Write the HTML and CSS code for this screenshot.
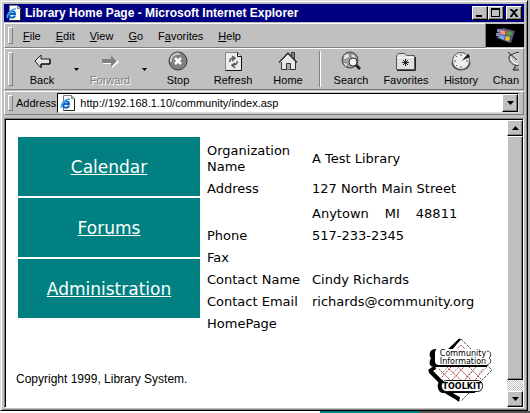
FILE: index.html
```html
<!DOCTYPE html>
<html lang="en">
<head>
<meta charset="utf-8">
<title>Library Home Page</title>
<link rel="stylesheet" href="styles.css">
</head>
<body>
<svg class="defs" aria-hidden="true">
  <symbol id="ie-page" viewBox="0 0 16 16">
    <path d="M3.5 .5h8l3 3v12h-11z" fill="#fffff4" stroke="#808080"/>
    <path d="M11.5 .5v3h3" fill="#c0c0c0" stroke="#808080"/>
    <path d="M14.5 4v11.5h-11" fill="none" stroke="#222"/>
    <path d="M9 10.5c-1 3-6 3-6-1s6-4.500 6-.5H3.500" fill="none" stroke="#0864c8" stroke-width="2"/>
    <path d="M2 13C-1 12 5 3 10 4" fill="none" stroke="#48a8f0" stroke-width="1.500"/>
  </symbol>
</svg>
<div class="window">
  <header class="titlebar">
    <svg class="page-icon"><use href="#ie-page"/></svg>
    <h1>Library Home Page - Microsoft Internet Explorer</h1>
    <div class="controls">
      <button class="raised" aria-label="Minimize"><svg viewBox="0 0 12 10"><path d="M2 7h6v2H2z"/></svg></button>
      <button class="raised" aria-label="Maximize"><svg viewBox="0 0 12 10"><path fill-rule="evenodd" d="M1 0h9v9H1zM2 2v6h7V2z"/></svg></button>
      <button class="raised close" aria-label="Close"><svg viewBox="0 0 12 10"><path d="M2 1h2l2 2 2-2h2v1L7 4.500 10 8v1H8L6 6 4 9H2V8l3-3.500L2 2z"/></svg></button>
    </div>
  </header>

  <div class="menu-row">
    <nav class="bar menus">
      <button><u>F</u>ile</button><button><u>E</u>dit</button><button><u>V</u>iew</button><button><u>G</u>o</button><button>F<u>a</u>vorites</button><button><u>H</u>elp</button>
    </nav>
    <svg class="brand" viewBox="0 0 38 23" aria-hidden="true">
      <path d="M0 0h38v23H0z"/>
      <path d="M12 6l5-2 12 3-4 12-4-1-10-4z" fill="#555a78"/>
      <path d="M11 5h4v3h-4zM10 9h4v3h-4z" fill="#8585b8"/>
      <path d="M15 6l5 1-1 4-5-1z" fill="#e89a90"/>
      <path d="M21 7l5 1-1 4-5-1z" fill="#50a050"/>
      <path d="M14 11l5 1-1 4-5-2z" fill="#70a8f0"/>
      <path d="M20 12l4 1-1 4-4-1z" fill="#f0c030"/>
      <path d="M19 7h2v3h-2z" fill="#e04818"/>
    </svg>
  </div>

  <div class="bar toolbar">
    <button class="tool"><svg viewBox="0 0 20 20"><path d="M3 10l6-6v4h9v5H9v4z" fill="#e4e4e4" stroke="#222"/><path d="M9 16v-3h9V8" fill="none" stroke="#000"/></svg>Back</button>
    <button class="drop" aria-label="Back history"><svg viewBox="0 0 5 3"><path d="M0 0h5L2.500 3z"/></svg></button>
    <button class="tool off"><svg viewBox="0 0 20 20"><path d="M3 9h9V5l7 6-7 6v-4H3z" fill="#fff"/><path d="M2 8h9V4l6 6-6 6v-4H2z" fill="#808080"/></svg>Forward</button>
    <button class="drop" aria-label="Forward history"><svg viewBox="0 0 5 3"><path d="M0 0h5L2.500 3z"/></svg></button>
    <button class="tool"><svg viewBox="0 0 20 20"><circle cx="10" cy="10" r="9" fill="#808080" stroke="#333"/><path d="M3 11a7 7 0 0 1 9-8" fill="none" stroke="#c8c8c8" stroke-width="2"/><path d="M7 7l6 6M13 7l-6 6" stroke="#fff" stroke-width="2.500"/></svg>Stop</button>
    <button class="tool"><svg viewBox="0 0 20 20"><path d="M2.500 1.500h12l4 4v14h-16z" fill="#ececec" stroke="#888"/><path d="M14.500 1.500v4h4v14h-16" fill="none" stroke="#111"/><path d="M7 11c-1-3 2-4 4-4M9 5l3 2-3 3M14 10c1 3-2 4-4 4M12 12l-3 2 3 3" fill="none" stroke="#555" stroke-width="1.500"/></svg>Refresh</button>
    <button class="tool"><svg viewBox="0 0 20 20"><path d="M13.500 5V1.500h3V8" fill="#888" stroke="#333"/><path d="M3.500 10v8.500h14V10l-7-7z" fill="#e8e8e8" stroke="#333"/><path d="M1 11.500L10 2l9 9.500" fill="none" stroke="#333" stroke-width="1.500"/><path d="M3 11l7-7" stroke="#fff"/><path d="M8.500 18.500v-6h4v6" fill="#aaa" stroke="#333"/></svg>Home</button>
    <span class="separator"></span>
    <button class="tool"><svg viewBox="0 0 20 20"><circle cx="9" cy="9" r="8" fill="#a4a4a4" stroke="#444"/><path d="M3 4l4-2 2 3-3 3-4 1zM10 2l5 3-1 3-4-2zM2 11l4 1 1 4-3-1z" fill="#e4e4e4" stroke="#666" stroke-width=".7"/><path d="M15 14l4 4" stroke="#222" stroke-width="3"/><circle cx="12" cy="11" r="4" fill="#f4f4f4" stroke="#333"/></svg>Search</button>
    <button class="tool"><svg viewBox="0 0 20 20"><path d="M.5 18.500v-14l2-2h6l2 2h8v14z" fill="#e0e0e0" stroke="#555"/><path d="M1 6.500h17" stroke="#fff"/><path d="M19.500 6v13.500H1" fill="none" stroke="#222"/><path d="M9.500 8v7M6 11.500h7M7 9l5 5M12 9l-5 5" stroke="#222"/></svg>Favorites</button>
    <button class="tool"><svg viewBox="0 0 20 20"><ellipse cx="10" cy="12" rx="9.500" ry="7.500" fill="#555"/><circle cx="10" cy="10" r="8.500" fill="#eee" stroke="#555"/><path d="M10 3v2M3 10h2M10 15v2M15 10h2M5 5l1 1M5 15l1-1" stroke="#555"/><path d="M10 10l7-8 2 4z" fill="#222"/><path d="M10 10l7-8" stroke="#eee"/></svg>History</button>
    <button class="tool partial"><svg viewBox="0 0 12 20"><path d="M2 5c-1 6 5 11 11 9V1L8 2z" fill="#ccc" stroke="#333"/><path d="M1 1l9 8M9 14l-3 5h7" fill="#999" stroke="#222"/><path d="M4 7c1 4 4 6 7 6" fill="none" stroke="#fff"/></svg>Chan</button>
  </div>

  <div class="bar address">
    <label for="url">Address</label>
    <div class="combo">
      <svg class="page-icon"><use href="#ie-page"/></svg>
      <input id="url" type="text" value="http://192.168.1.10/community/index.asp">
      <button class="raised" aria-label="Show addresses"><svg viewBox="0 0 7 4"><path d="M0 0h7L3.500 4z"/></svg></button>
    </div>
  </div>

  <div class="viewport">
    <main>
      <div class="columns">
        <nav class="sections">
          <a href="#calendar">Calendar</a>
          <a href="#forums">Forums</a>
          <a href="#administration">Administration</a>
        </nav>
        <table>
          <tr><th scope="row">Organization Name</th><td>A Test Library</td></tr>
          <tr><th scope="row">Address</th><td>127 North Main Street</td></tr>
          <tr class="city"><th></th><td><span>Anytown</span><span>MI</span><span>48811</span></td></tr>
          <tr><th scope="row">Phone</th><td>517-233-2345</td></tr>
          <tr><th scope="row">Fax</th><td></td></tr>
          <tr><th scope="row">Contact Name</th><td>Cindy Richards</td></tr>
          <tr><th scope="row">Contact Email</th><td>richards@community.org</td></tr>
          <tr><th scope="row">HomePage</th><td></td></tr>
        </table>
      </div>
      <footer>
        <p>Copyright 1999, Library System.</p>
        <svg class="logo" viewBox="0 0 66 64" role="img" aria-label="Community Information Toolkit">
          <path d="M34 1l31 31-31 31" fill="none" stroke="#555" stroke-dasharray="3 1"/>
          <path d="M33 1L22 12M2 32l30 31" stroke="#000" stroke-width="2"/>
          <path d="M32 1L20 12h5L34 1zM1 32l7-5 1 4-3 2 11 11-3 3zM16 54l4-1 13 7-1 3z"/>
          <path d="M3 33l12 12M20 54l12 7" stroke="#000" stroke-width="4"/>
          <path d="M29 12l5-5 5 5M12 31l13 13M20 29l17 16M31 29l16 16M42 29l12 12M15 39l9-10M25 42l12-13M36 44l13-15M47 44l9-13" fill="none" stroke="#a33" stroke-dasharray="2 1"/>
          <path d="M14 36l7-7M24 37l8-8M39 39l10-10M52 37l8-8" stroke="#999" stroke-dasharray="2 1"/>
          <path d="M9 11c-8 0-7 8-5 9-3 6-1 9 4 9h52v-3H10V13z"/>
          <rect x="8" y="11" width="56" height="16" rx="4" fill="#fff"/>
          <path d="M60 13c4 0 5 5 2 7 3 2 2 6-2 7" fill="none" stroke="#333"/>
          <path d="M16 42c-7 0-7 12 0 13h32v-3H17z"/>
          <rect x="14.500" y="42.500" width="41" height="11" rx="5" fill="#fff" stroke="#111"/>
          <text class="small" x="36" y="18">Community</text>
          <text class="small" x="36" y="26">Information</text>
          <text class="kit" x="35" y="51">TOOLKIT</text>
        </svg>
      </footer>
    </main>
    <div class="scrollbar">
      <button class="raised" aria-label="Scroll up"><svg viewBox="0 0 7 4"><path d="M0 4h7L3.500 0z"/></svg></button>
      <div class="thumb raised"></div>
      <div class="track"></div>
      <button class="raised" aria-label="Scroll down"><svg viewBox="0 0 7 4"><path d="M0 0h7L3.500 4z"/></svg></button>
    </div>
  </div>
</div>
</body>
</html>
```
FILE: styles.css
```css
* { box-sizing: border-box; }

body {
  display: flex;
  min-height: 100vh;
  margin: 0;
  padding: 0 2px 2px 0;
  font: 11px/14px "Liberation Sans", Arial, sans-serif;
  color: #000;
  background: linear-gradient(90deg, #fff 320px, #008080 320px 420px, #555 420px) bottom / 100% 2px no-repeat #b8b8b8;
}

button {
  margin: 0;
  padding: 0;
  border: 0;
  font: inherit;
  color: inherit;
  background: none;
}

.defs { position: absolute; width: 0; height: 0; }

.window {
  display: flex;
  flex: 1;
  flex-direction: column;
  min-width: 0;
  padding: 3px 3px 2px 3px;
  border: 1px solid #dfdfdf;
  border-right-color: #000;
  border-bottom-color: #000;
  background: #c0c0c0;
  box-shadow: inset 1px 1px #fff, inset -1px -1px #808080;
}

.raised {
  display: flex;
  align-items: center;
  justify-content: center;
  border: 1px solid;
  border-color: #fff #000 #000 #fff;
  background: #c0c0c0;
  box-shadow: inset -1px -1px #808080;
}

.page-icon { flex: none; width: 16px; height: 16px; }

.titlebar {
  display: flex;
  align-items: center;
  height: 18px;
  padding: 0 2px;
  color: #fff;
  background: #000080;
}

.titlebar h1 {
  flex: 1;
  margin: 0 0 0 3px;
  overflow: hidden;
  font-size: 12px;
  white-space: nowrap;
}

.controls { display: flex; color: #000; }
.controls button { width: 16px; height: 14px; }
.controls .close { margin-left: 2px; }
.controls svg { width: 12px; height: 10px; }

.menu-row { display: flex; height: 25px; margin-top: 1px; }

.bar {
  display: flex;
  align-items: center;
  min-width: 0;
  padding-left: 3px;
  border: 1px solid;
  border-color: #fff #808080 #808080 #fff;
}

.bar::before {
  content: "";
  flex: none;
  align-self: stretch;
  width: 3px;
  margin: 3px 0;
  border: 1px solid;
  border-color: #fff #808080 #808080 #fff;
}

.menus { flex: 1; gap: 15px; }
.menus::before { margin-right: -5px; }
.brand { width: 38px; height: 23px; margin-top: 1px; }

.toolbar { height: 42px; padding-right: 4px; overflow: hidden; }
.toolbar::before { margin-right: 2px; }

.tool {
  display: flex;
  flex: 0 0 54px;
  flex-direction: column;
  align-items: center;
  gap: 2px;
  margin-right: 1px;
}

.tool svg { width: 20px; height: 20px; }
.partial { flex: 1; align-items: flex-end; max-width: 54px; margin: 0; }
.partial svg { width: 12px; }
.off { color: #808080; text-shadow: 1px 1px #fff; }
.drop { flex: 0 0 13px; }
.drop svg { display: block; width: 5px; height: 3px; margin: auto; }

.separator {
  flex: none;
  width: 2px;
  height: 36px;
  margin: 0 3px;
  border-left: 1px solid #808080;
  border-right: 1px solid #fff;
}

.address { height: 24px; margin-top: 1px; padding-right: 4px; }
.address label { margin: 0 1px 0 3px; }

.combo {
  display: flex;
  flex: 1;
  align-items: center;
  height: 20px;
  min-width: 0;
  padding-left: 2px;
  border: 1px solid;
  border-color: #000 #dfdfdf #dfdfdf #000;
  background: #fff;
}

.combo input {
  flex: 1;
  min-width: 0;
  padding: 0 4px;
  border: 0;
  outline: 0;
  font: inherit;
  background: none;
}

.combo button { width: 16px; height: 18px; }
.combo button svg, .scrollbar svg { width: 7px; height: 4px; }

.viewport {
  display: flex;
  flex: 1;
  margin-top: 3px;
  border: 1px solid #808080;
  border-right-color: #fff;
  border-bottom-color: #fff;
  background: #fff;
  box-shadow: inset 1px 1px #000;
}

main {
  display: flex;
  flex: 1;
  flex-direction: column;
  min-width: 0;
  padding: 18px 14px 5px 13px;
}

.columns { display: flex; gap: 6px; align-items: flex-start; }

.sections {
  display: grid;
  flex: 0 0 182px;
  gap: 2px;
  font: 17px/20px "DejaVu Sans", Verdana, sans-serif;
}

.sections a {
  display: grid;
  place-items: center;
  height: 59px;
  color: #fff;
  background: #008080;
}

table {
  margin-top: 3px;
  border-collapse: collapse;
  font: 13px/16px "DejaVu Sans", Verdana, sans-serif;
}

th, td { height: 22px; padding: 3px 1px; text-align: left; }
th { width: 105px; font-weight: normal; }
.city td { height: 25px; padding-top: 6px; }
.city span { margin-right: 16px; }

footer {
  display: flex;
  align-items: flex-end;
  justify-content: space-between;
  margin-top: auto;
}

footer p { margin: 0 0 16px -2px; font-size: 12px; }

.logo { width: 66px; height: 64px; }
.logo text { text-anchor: middle; font-family: "DejaVu Sans", sans-serif; }
.small { font-size: 8px; }
.kit { font-size: 8px; font-weight: bold; }

.scrollbar { display: flex; flex-direction: column; width: 16px; margin-top: 1px; }
.scrollbar button { height: 16px; }
.thumb { flex: 1; }
.track { height: 11px; background: repeating-conic-gradient(#c0c0c0 0 25%, #fff 0 50%) 0 0 / 2px 2px; }
```
